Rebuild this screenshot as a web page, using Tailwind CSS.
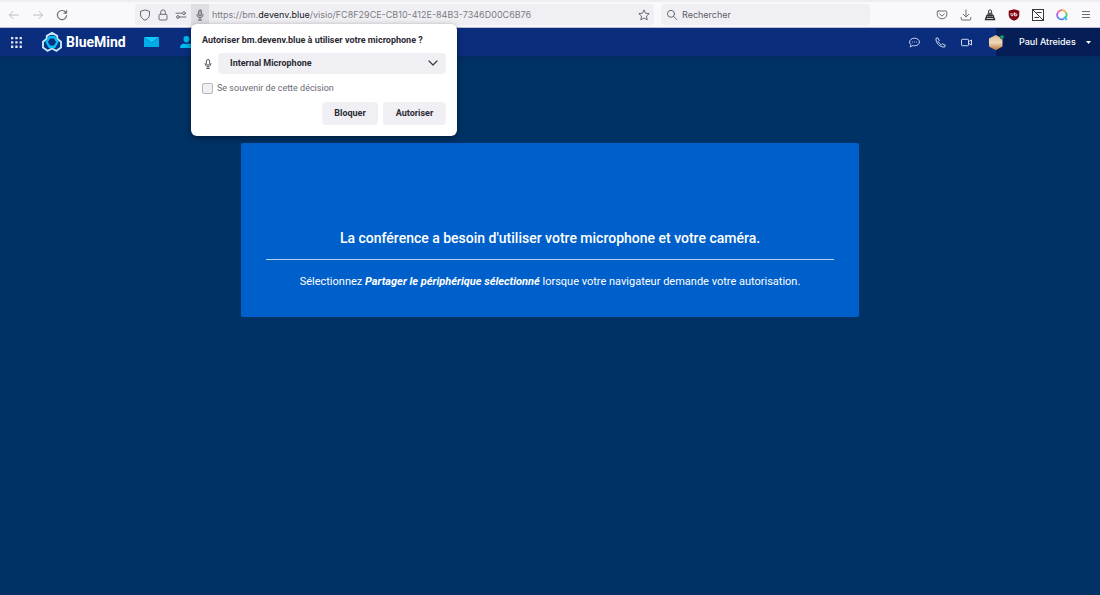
<!DOCTYPE html>
<html lang="fr">
<head>
<meta charset="utf-8">
<meta name="viewport" content="width=device-width, initial-scale=1">
<title>BlueMind – Visio</title>
<script src="https://cdn.jsdelivr.net/npm/@tailwindcss/browser@4"></script>
</head>
<body class="flex min-h-screen flex-col bg-[#003266] font-['Inter',sans-serif]">

<!-- Browser toolbar -->
<div class="flex h-7 items-center border-t-2 border-b border-t-[#eeeef2] border-b-[#b9bdcf] bg-[#f9f9fb] text-[#6a6a74]">
  <nav class="flex w-[135px] items-center gap-3 pl-2" aria-label="Navigation">
    <button aria-label="Précédent" class="text-[#bdbdc3]"><svg class="size-3" viewBox="0 0 12 12" fill="none" stroke="currentColor" stroke-linecap="round" stroke-linejoin="round"><path d="M10.500 6H1.500M5 2.300L1.300 6L5 9.700"/></svg></button>
    <button aria-label="Suivant" class="text-[#bdbdc3]"><svg class="size-3" viewBox="0 0 12 12" fill="none" stroke="currentColor" stroke-linecap="round" stroke-linejoin="round"><path d="M1.500 6H10.500M7 2.300L10.700 6L7 9.700"/></svg></button>
    <button aria-label="Actualiser"><svg class="size-3" viewBox="0 0 12 12" fill="none" stroke="currentColor" stroke-width="1.100" stroke-linecap="round" stroke-linejoin="round"><path d="M10 3.700A4.600 4.600 0 1 0 10.600 6.600"/><path d="M10.800 1.300V4.400H7.700Z" fill="currentColor" stroke-width=".4"/></svg></button>
  </nav>
  <div class="flex h-[21px] flex-1 items-center rounded-sm bg-[#f0f0f4]">
    <div class="flex w-14 items-center justify-between pr-1 pl-1">
      <svg class="size-3" viewBox="0 0 12 12" fill="none" stroke="currentColor" stroke-linejoin="round"><path d="M6 .9L10.500 2.300V5C10.500 8 9 10.100 6 11.200C3 10.100 1.500 8 1.500 5V2.300Z"/></svg>
      <svg class="size-3" viewBox="0 0 12 12" fill="none" stroke="currentColor"><rect x="2" y="5.300" width="8" height="5.700" rx="1"/><path d="M3.700 5.300V3.200a2.300 2.300 0 0 1 4.600 0V5.300"/></svg>
      <svg class="size-3" viewBox="0 0 12 12" fill="none" stroke="currentColor" stroke-linecap="round"><path d="M1 4.200H6.800M5.200 8H11"/><circle cx="9" cy="4.200" r="1.400"/><circle cx="3" cy="8" r="1.400"/></svg>
    </div>
    <div class="relative h-[21px] w-[18px]">
      <button aria-label="Microphone" class="flex size-full items-center justify-center bg-[#dedee3]"><svg class="size-3" viewBox="0 0 12 12" fill="none" stroke="currentColor" stroke-linecap="round"><rect x="4.400" y="1" width="3.200" height="6" rx="1.600" fill="#aaaab1"/><path d="M2.800 5.500a3.200 3.200 0 0 0 6.400 0M6 8.700V11M4.300 11h3.400"/></svg></button>

      <!-- Permission prompt -->
      <form class="absolute top-5 left-0 z-10 w-[266px] rounded-md bg-white px-[11px] pt-2.5 pb-[11px] font-['Roboto',sans-serif] text-[#2b2a33] shadow-[0_2px_6px_rgba(0,0,0,0.45)]">
        <p class="text-[9px] leading-3 font-bold whitespace-nowrap">Autoriser bm.devenv.blue à utiliser votre microphone ?</p>
        <div class="mt-[7px] flex items-center">
          <label for="mic" class="w-4 text-[#5b5b66]" aria-label="Microphone"><svg class="size-3" viewBox="0 0 12 12" fill="none" stroke="currentColor" stroke-linecap="round"><rect x="4.400" y="1.500" width="3.200" height="5.500" rx="1.600"/><path d="M3 5.500a3 3 0 0 0 6 0M6 8.500V10.500M4.600 10.500h2.800"/></svg></label>
          <div class="relative flex-1">
            <select id="mic" class="block h-[21px] w-full appearance-none rounded-sm bg-[#f0f0f4] pl-3 text-[9px] font-bold"><option>Internal Microphone</option></select>
            <svg class="pointer-events-none absolute top-[5px] right-2 size-[10px]" viewBox="0 0 10 10" fill="none" stroke="#3a3944" stroke-width="1.200" stroke-linecap="round" stroke-linejoin="round"><path d="M1 3L5 7L9 3"/></svg>
          </div>
        </div>
        <div class="mt-2 flex items-center gap-1 text-[9px] leading-3 text-[#6a6a73]">
          <input id="remember" type="checkbox" class="size-[11px] appearance-none rounded-xs border border-[#b5b5bb] bg-[#f0f0f4]">
          <label for="remember">Se souvenir de cette décision</label>
        </div>
        <div class="mt-2 flex justify-end gap-[5px] text-[9px] font-bold">
          <button type="button" class="h-[23px] w-14 rounded-sm bg-[#f0f0f4]">Bloquer</button>
          <button type="button" class="h-[23px] w-[63px] rounded-sm bg-[#f0f0f4]">Autoriser</button>
        </div>
      </form>
    </div>
    <div class="flex-1 pl-[3px] text-[9px] whitespace-nowrap text-[#7b7b84]">https://bm.<span class="text-[#15141a]">devenv.blue</span>/visio/FC8F29CE-CB10-412E-84B3-7346D00C6B76</div>
    <button aria-label="Marquer cette page" class="mr-1"><svg class="size-3" viewBox="0 0 12 12" fill="none" stroke="currentColor" stroke-linejoin="round"><path d="M6 .9L7.500 4.200L11.200 4.600L8.500 7.100L9.200 10.800L6 9L2.800 10.800L3.500 7.100L.8 4.600L4.500 4.200Z"/></svg></button>
  </div>
  <label class="ml-[7px] flex h-[21px] w-[209px] items-center gap-1 rounded-sm bg-[#f0f0f4] pl-[5px]">
    <svg class="size-3" viewBox="0 0 12 12" fill="none" stroke="currentColor" stroke-linecap="round"><circle cx="5" cy="4.800" r="3.500"/><path d="M7.600 7.400L10.800 10.600"/></svg>
    <input type="search" aria-label="Rechercher" placeholder="Rechercher" class="w-40 bg-transparent text-[9px] outline-none placeholder:text-[#5b5b66]">
  </label>
  <div class="flex w-[230px] items-center justify-end gap-3 pr-2">
    <button aria-label="Pocket"><svg class="size-3" viewBox="0 0 12 12" fill="none" stroke="currentColor" stroke-linecap="round" stroke-linejoin="round"><path d="M2.200 2H9.800a1 1 0 0 1 1 1V5.500a4.800 4.300 0 0 1-9.600 0V3a1 1 0 0 1 1-1Z"/><path d="M3.700 4.900L6 7.100L8.300 4.900"/></svg></button>
    <button aria-label="Téléchargements"><svg class="size-3" viewBox="0 0 12 12" fill="none" stroke="currentColor" stroke-linecap="round" stroke-linejoin="round"><path d="M6 1V7.800M3.300 5.300L6 8L8.700 5.300M1.200 8.500V10a1 1 0 0 0 1 1H9.800a1 1 0 0 0 1-1V8.500"/></svg></button>
    <button aria-label="Extension"><svg class="size-3" viewBox="0 0 12 12"><path d="M4.600 4V1.500Q6 0 7.400 1.500V4" fill="none" stroke="#38383d"/><path d="M3.800 3.700H8.200L9 6H3Z" fill="#55555a"/><path d="M2.300 6H9.700L11.400 11.200H.6Z" fill="#2c2c30"/><path d="M3.200 7.400H4.400M5.400 7.400H6.600M7.600 7.400H8.800M2.600 9.500H9.400" stroke="#d8d8dc" stroke-width=".9"/></svg></button>
    <button aria-label="uBlock"><svg class="size-3" viewBox="0 0 12 12"><path d="M6 .3L11.300 1.700V6C11.300 8.700 9 10.700 6 11.800C3 10.700.7 8.700.7 6V1.700Z" fill="#800610"/><path d="M3 4V5.800a1 1 0 0 0 2 0V4M6.600 3.400V6.800H8a.9.900 0 0 0 0-2H6.600" fill="none" stroke="#fff" stroke-width=".9"/></svg></button>
    <button aria-label="Capture"><svg class="size-3" viewBox="0 0 12 12" fill="none" stroke="#38383d"><rect x=".5" y=".5" width="11" height="11"/><path d="M1 1L11 11M4.500 3.500H9.500M2.500 8.500H7"/></svg></button>
    <button aria-label="Qwant"><svg class="size-3" viewBox="0 0 12 12" fill="none" stroke-width="1.800"><path d="M1.500 7.800A4.600 4.600 0 0 1 1.900 3.500" stroke="#a95ff0"/><path d="M1.900 3.500A4.600 4.600 0 0 1 6 1.200" stroke="#f06b9a"/><path d="M6 1.200A4.600 4.600 0 0 1 10 3.600" stroke="#f3b23e"/><path d="M10 3.600A4.600 4.600 0 0 1 9.200 9" stroke="#42cf86"/><path d="M8 7.800L10.800 11" stroke="#30b7f4"/><path d="M8 9.800A4.600 4.600 0 0 1 1.500 7.800" stroke="#5280f5"/></svg></button>
    <button aria-label="Menu"><svg class="size-3" viewBox="0 0 12 12" stroke="currentColor"><path d="M2 2.500H10M2 5.500H10M2 8.500H10"/></svg></button>
  </div>
</div>

<!-- Application header -->
<header class="flex h-7 items-center bg-[#0a2d7d] text-white">
  <button aria-label="Applications" class="ml-[11px]"><svg class="size-[11px]" viewBox="0 0 11 11" fill="#e4e9f5"><path d="M0 0h2.300v2.300H0zM4.300 0h2.300v2.300H4.300zM8.600 0h2.300v2.300H8.600zM0 4.300h2.300v2.300H0zM4.300 4.300h2.300v2.300H4.300zM8.600 4.300h2.300v2.300H8.600zM0 8.600h2.300v2.300H0zM4.300 8.600h2.300v2.300H4.300zM8.600 8.600h2.300v2.300H8.600z"/></svg></button>
  <a href="#" class="ml-5 flex items-center gap-1">
    <svg class="size-5" viewBox="0 0 20 20" fill="none" stroke-linejoin="round"><g stroke="#c3e9fb" stroke-width="1.900"><path d="M4.800 8V3.800L10 .9L15.200 3.800V8"/><path d="M4.800 6.800L1 9.800V15.500L5.500 18.800L10 16.500"/><path d="M15.200 6.800L19 9.800V15.500L14.500 18.800L10 16.500"/></g><path d="M7.500 5.200H12.500L15.400 10L12.500 14.800H7.500L4.600 10Z" fill="#0a2d7d" stroke="#08bdf0" stroke-width="2.400"/></svg>
    <span class="font-['Roboto',sans-serif] text-[14px] leading-5 font-bold">BlueMind</span>
  </a>
  <a href="#" aria-label="Messagerie" class="ml-[18px]"><svg class="h-2.5 w-[15px]" viewBox="0 0 15 10"><path d="M0 0H15V10H0Z" fill="#00acea"/><path d="M0 0H15L7.500 5.800Z" fill="#13c9f7"/><path d="M0 .4L7.500 6L15 .4" fill="none" stroke="#087fc4" stroke-width=".7"/></svg></a>
  <a href="#" aria-label="Contacts" class="ml-[21px]"><svg class="h-3 w-[13px]" viewBox="0 0 13 12" fill="#00b7ee"><path d="M6.500 0a3.100 3.100 0 0 1 3 3.300C9.500 5 8.300 6.700 6.500 6.700S3.500 5 3.500 3.300a3.100 3.100 0 0 1 3-3.300ZM4 7.500Q6.500 8.700 9 7.500C11.500 8 13 9 13 12H0C0 9 1.500 8 4 7.500Z"/></svg></a>
  <div class="ml-auto flex items-center gap-[15px] pr-6 text-[#cfdaf0]">
    <button aria-label="Messages"><svg class="size-[11px]" viewBox="0 0 11 11" fill="none" stroke="currentColor" stroke-linejoin="round"><path d="M5.500 1.200C8.300 1.200 10.400 2.900 10.400 5S8.300 8.800 5.500 8.800Q4.600 8.800 3.800 8.500Q2.700 9.700 1 9.800Q1.900 8.800 1.900 7.600Q.6 6.500 .6 5C.6 2.900 2.700 1.200 5.500 1.200Z"/><path d="M3 5h1M5 5h1M7 5h1" stroke-width=".8"/></svg></button>
    <button aria-label="Appeler"><svg class="size-[11px]" viewBox="0 0 11 11" fill="none" stroke="currentColor" stroke-linejoin="round"><path d="M1 1.300L2.800.8L4.200 3.500L3.100 4.600Q4.200 6.900 6.400 7.900L7.500 6.800L10.200 8.200L9.700 10C5 10.500.5 6 1 1.300Z"/></svg></button>
    <button aria-label="Visio"><svg class="size-[11px]" viewBox="0 0 11 11" fill="none" stroke="currentColor" stroke-linejoin="round"><rect x=".5" y="2.300" width="7" height="6.400" rx=".8"/><path d="M7.500 4.700L10.500 3V8L7.500 6.300"/></svg></button>
  </div>
  <button class="relative flex h-7 w-[104px] items-center bg-[#061e56] pl-[23px] text-[9px] font-medium">
    <svg class="absolute top-[5px] -left-2 h-[18px] w-4" viewBox="0 0 16 18"><defs><linearGradient id="av" x2="0" y2="1"><stop stop-color="#d8b993"/><stop offset=".5" stop-color="#efd9b9"/><stop offset="1" stop-color="#b87435"/></linearGradient></defs><path d="M7.800 2L14.500 5.500V13.500L7.800 17.300L1 13.500V5.500Z" fill="url(#av)"/><circle cx="14" cy="4" r="2" fill="#24a665" stroke="#061e56" stroke-width=".5"/></svg>
    <span class="whitespace-nowrap">Paul Atreides</span>
    <svg class="mr-[9px] ml-auto h-[3px] w-[5px]" viewBox="0 0 5 3" fill="#fff"><path d="M0 0H5L2.500 3Z"/></svg>
  </button>
</header>

<!-- Conference message -->
<main class="flex flex-1 flex-col items-center bg-linear-to-b from-[#002c61] to-[#003266] to-[8px] pt-[87px]">
  <section class="w-[618px] max-w-full rounded-xs bg-[#0060cb] px-[25px] pt-[85px] pb-[26px] text-center font-['Roboto',sans-serif] text-white">
    <h1 class="text-[14px] leading-5 font-medium">La conférence a besoin d'utiliser votre microphone et votre caméra.</h1>
    <hr class="mt-[11px] border-[#b5d0f0]">
    <p class="mt-[13px] text-[11px] leading-[18px]">Sélectionnez <strong class="font-bold italic">Partager le périphérique sélectionné</strong> lorsque votre navigateur demande votre autorisation.</p>
  </section>
</main>
</body>
</html>
